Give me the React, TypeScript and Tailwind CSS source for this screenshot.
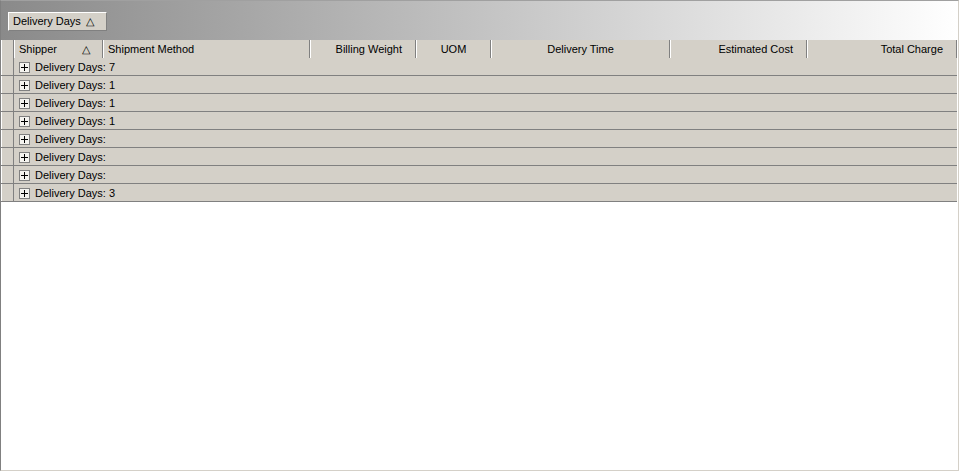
import React from "react";

const columns = [
  { label: "Shipper", width: "w-[89px]", align: "justify-between", sort: true },
  { label: "Shipment Method", width: "w-[207px]", align: "justify-start" },
  { label: "Billing Weight", width: "w-[106px]", align: "justify-end" },
  { label: "UOM", width: "w-[75px]", align: "justify-center" },
  { label: "Delivery Time", width: "w-[179px]", align: "justify-center" },
  { label: "Estimated Cost", width: "w-[137px]", align: "justify-end" },
  { label: "Total Charge", width: "w-[150px]", align: "justify-end" },
];

const groups = ["7", "1", "1", "1", "", "", "", "3"];

const App = () => {
  return (
    <div
      className="w-[960px] h-[472px] bg-white overflow-hidden text-[11px] text-black"
      style={{ fontFamily: '"Liberation Sans", Arial, sans-serif' }}
    >
      <div className="w-[959px] h-[471px] flex flex-col border-l border-t border-r border-b border-l-[#808080] border-t-[#a0a0a0] border-r-[#d4d0c8] border-b-[#d4d0c8]">
        <div className="h-[39px] shrink-0 flex items-center px-[7px] bg-gradient-to-r from-[#8a8a8a] to-white">
          <div className="h-[19px] px-[4px] flex items-center gap-[5px] bg-[#d4d0c8] border border-t-white border-l-white border-r-[#808080] border-b-[#808080] mt-[1px]">
            <span>Delivery Days</span>
            <span className="text-[11px] pr-[8px]">△</span>
          </div>
        </div>
        <div className="flex shrink-0 h-[18px] bg-[#d4d0c8] w-[956px]">
          <div className="w-[13px] border-l border-l-white border-r border-r-[#808080]" />
          {columns.map((c) => (
            <div
              key={c.label}
              className={`${c.width} flex items-center ${c.align} px-[4px] border-l border-l-white border-r border-r-[#808080]`}
            >
              {c.sort ? (
                <>
                  <span>{c.label}</span>
                  <span className="pr-[8px]">△</span>
                </>
              ) : (
                <span className={c.align === "justify-end" ? "pr-[9px]" : ""}>{c.label}</span>
              )}
            </div>
          ))}
        </div>
        {groups.map((g, i) => (
          <div key={i} className="flex shrink-0 h-[18px] bg-[#d4d0c8] w-[956px] border-b border-b-[#808080]">
            <div className="w-[13px] border-r border-r-[#808080] border-l border-l-white" />
            <div className="flex items-center pl-[5px] pt-[1px] gap-[5px]">
              <div className="w-[11px] h-[11px] border border-[#808080] bg-[#f4f3ef] flex items-center justify-center relative">
                <div className="absolute w-[7px] h-[1px] bg-black" />
                <div className="absolute w-[1px] h-[7px] bg-black" />
              </div>
              <span>Delivery Days: {g}</span>
            </div>
          </div>
        ))}
        <div className="flex-1 bg-white" />
      </div>
    </div>
  );
};

export default App;
